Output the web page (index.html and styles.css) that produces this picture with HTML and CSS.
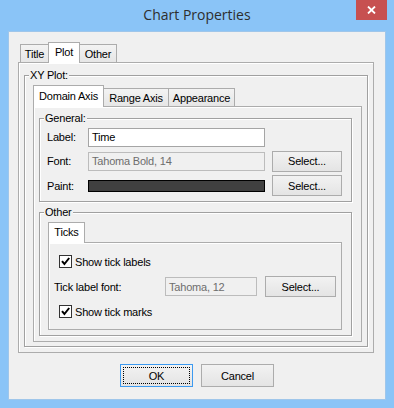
FILE: index.html
```html
<!DOCTYPE html>
<html>
<head>
<meta charset="utf-8">
<link rel="stylesheet" href="styles.css">
</head>
<body>
<div class="window">
  <div class="titlebar">
    <span></span>
    <div class="title">Chart Properties</div>
    <div class="close"><svg width="9" height="8" viewBox="0 0 9 8"><path d="M1 0.5 L8 7.5 M8 0.5 L1 7.5" stroke="#fff" stroke-width="1.8" fill="none"/></svg></div>
  </div>
  <div class="client">
    <div class="tabs outer-tabs">
      <div class="tab w-title">Title</div>
      <div class="tab active w-plot">Plot</div>
      <div class="tab w-other">Other</div>
    </div>
    <div class="panel outer-panel">
      <fieldset class="group xy">
        <legend>XY Plot:</legend>
        <div class="tabs domain-tabs">
          <div class="tab active w-domain">Domain Axis</div>
          <div class="tab w-range">Range Axis</div>
          <div class="tab w-appear">Appearance</div>
        </div>
        <div class="panel domain-panel">
          <fieldset class="group general">
            <legend>General:</legend>
            <div class="form-grid">
              <span class="lbl">Label:</span>
              <div class="field">Time</div>
              <span></span>
              <span class="lbl">Font:</span>
              <div class="field disabled">Tahoma Bold, 14</div>
              <button class="btn">Select...</button>
              <span class="lbl">Paint:</span>
              <div class="swatch"></div>
              <button class="btn">Select...</button>
            </div>
          </fieldset>
          <fieldset class="group other">
            <legend>Other</legend>
            <div class="tabs ticks-tabs">
              <div class="tab active w-ticks">Ticks</div>
            </div>
            <div class="panel ticks-panel">
              <div class="check-row">
                <svg width="13" height="13" viewBox="0 0 13 13"><rect x="0.5" y="0.5" width="12" height="12" fill="#fff" stroke="#333"/><path d="M3 6.2 L5.4 9 L10.2 3" fill="none" stroke="#000" stroke-width="2"/></svg>
                <span>Show tick labels</span>
              </div>
              <div class="font-row">
                <span>Tick label font:</span>
                <div class="field disabled">Tahoma, 12</div>
                <button class="btn">Select...</button>
              </div>
              <div class="check-row">
                <svg width="13" height="13" viewBox="0 0 13 13"><rect x="0.5" y="0.5" width="12" height="12" fill="#fff" stroke="#333"/><path d="M3 6.2 L5.4 9 L10.2 3" fill="none" stroke="#000" stroke-width="2"/></svg>
                <span>Show tick marks</span>
              </div>
            </div>
          </fieldset>
        </div>
      </fieldset>
    </div>
    <div class="actions">
      <button class="btn big ok"><span class="focus">OK</span></button>
      <button class="btn big">Cancel</button>
    </div>
  </div>
</div>
</body>
</html>
```

FILE: styles.css
```css
* { box-sizing: border-box; }
body { margin: 0; }

.window {
  width: 394px;
  height: 408px;
  background: #8ac4f7;
  display: flex;
  flex-direction: column;
  font-family: "Liberation Sans", Arial, sans-serif;
  font-size: 11px;
  letter-spacing: -0.2px;
  color: #000;
  overflow: hidden;
}

.titlebar {
  height: 31px;
  flex: none;
  display: grid;
  grid-template-columns: 1fr auto 1fr;
}
.title {
  font-family: "Open Sans", sans-serif;
  font-size: 14px;
  letter-spacing: 0;
  color: #2e2e2e;
  line-height: 30px;
}
.close {
  justify-self: end;
  width: 31px;
  height: 20px;
  margin-right: 7px;
  background: #c75050;
  display: flex;
  align-items: center;
  justify-content: center;
}

.client {
  flex: 1;
  margin: 0 8px 8px;
  background: #f0f0f0;
  border: 1px solid #9fc6ea;
  padding: 10px 11px 0 9px;
  display: flex;
  flex-direction: column;
}

.tabs { display: flex; align-items: flex-end; flex: none; }
.tab {
  height: 18px;
  border: 1px solid #acacac;
  border-bottom: 0;
  margin-left: -1px;
  background: linear-gradient(#f3f3f3, #e6e6e6);
  display: flex;
  align-items: center;
  justify-content: center;
  white-space: nowrap;
}
.tab:first-child { margin-left: 0; }
.tab.active {
  height: 21px;
  margin-bottom: -1px;
  background: #fff;
  position: relative;
  z-index: 1;
  padding-bottom: 2px;
}

.outer-tabs { margin-left: 2px; }
.w-title { width: 29px; }
.w-plot { width: 32px; }
.w-other { width: 38px; }
.w-domain { width: 71px; height: 22px !important; }
.w-range { width: 66px; }
.w-appear { width: 67px; }
.w-ticks { width: 37px; }

.panel {
  border: 1px solid #acacac;
  background: #f0f0f0;
  box-shadow: inset 1px 1px 0 #fff;
}
.outer-panel { padding: 6px 5px 5px 5px; }

.group {
  margin: 0;
  padding: 0;
  min-width: 0;
  border: 1px solid #a0a0a0;
  box-shadow: 1px 1px 0 #fff, inset 1px 1px 0 #fff;
}
.group legend {
  padding: 0 1px;
  margin-left: -4px;
  line-height: 13px;
  background: #f0f0f0;
}
.general legend { margin-left: -3px; }

.xy { padding: 3px 5px 4px 8px; }
.domain-panel { padding: 5px 9px 5px 5px; }

.general { padding: 2px 9px 5px 7px; }
.form-grid {
  display: grid;
  grid-template-columns: 34px 177px 70px;
  grid-template-rows: 20px 20px 21px;
  column-gap: 7px;
  row-gap: 4px;
  align-items: center;
}
.field {
  height: 19px;
  border: 1px solid #a5a5a5;
  background: #fff;
  padding: 0 3px;
  display: flex;
  align-items: center;
  white-space: nowrap;
  overflow: hidden;
}
.field.disabled {
  background: #f0f0f0;
  border-color: #bcbcbc;
  color: #6d6d6d;
}
.swatch {
  height: 12px;
  background: #404040;
  border: 1px solid #000;
}

.btn {
  font: inherit;
  letter-spacing: inherit;
  color: #000;
  height: 21px;
  padding: 0;
  border: 1px solid #acacac;
  background: linear-gradient(#f2f2f2, #e4e4e4);
  display: flex;
  align-items: center;
  justify-content: center;
}

.other { margin-top: 4px; padding: 3px 9px 5px 8px; }
.ticks-panel {
  padding: 12px 5px 11px 5px;
  display: flex;
  flex-direction: column;
  gap: 8px;
}
.check-row {
  height: 13px;
  margin-left: 5px;
  display: flex;
  align-items: center;
  gap: 3px;
}
.check-row svg { flex: none; }
.font-row {
  height: 21px;
  display: grid;
  grid-template-columns: 103px 92px 71px;
  column-gap: 8px;
  align-items: center;
}
.font-row .btn { height: 21px; }

.actions {
  display: flex;
  justify-content: center;
  gap: 8px;
  margin-top: 11px;
  margin-left: 2px;
}
.btn.big { width: 73px; height: 23px; }
.btn.ok { border-color: #3c9af0; padding: 2px; }
.focus {
  flex: 1;
  align-self: stretch;
  display: flex;
  align-items: center;
  justify-content: center;
  outline: 1px dotted #000;
  outline-offset: -1px;
}
```
